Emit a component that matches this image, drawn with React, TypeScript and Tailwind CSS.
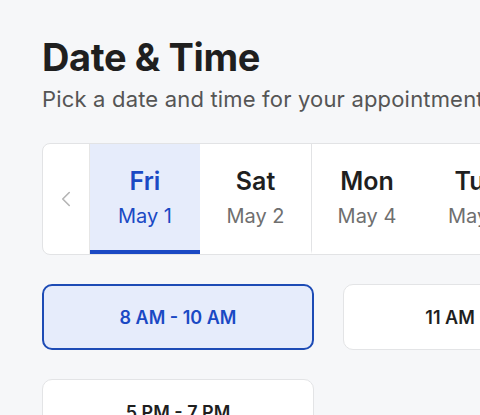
import React, { useState } from "react";
import { ChevronLeft } from "lucide-react";

const days = [
  { day: "Fri", date: "May 1" },
  { day: "Sat", date: "May 2", weekEnd: true },
  { day: "Mon", date: "May 4" },
  { day: "Tue", date: "May 5" },
  { day: "Wed", date: "May 6" },
];

const slots = ["8 AM - 10 AM", "11 AM - 1 PM", "5 PM - 7 PM"];

export default function App() {
  const [selectedDay, setSelectedDay] = useState(0);
  const [selectedSlot, setSelectedSlot] = useState(0);

  return (
    <div
      className="w-[480px] h-[415px] overflow-hidden bg-[#f6f7f9] text-[#1f1f1f]"
      style={{ fontFamily: "Inter, 'Noto Sans', sans-serif" }}
    >
      <div className="w-[615px] pl-[42px] pt-[38px]">
        <h1 className="text-[38px] leading-none font-bold tracking-[-0.01em] text-[#1f1f1f]">
          Date &amp; Time
        </h1>
        <p className="mt-[12px] text-[22px] leading-none tracking-[0.008em] text-[#555] whitespace-nowrap">
          Pick a date and time for your appointment
        </p>

        <div className="mt-[33px] flex h-[112px] w-[573px] overflow-hidden rounded-[8px] border border-[#e2e3e5] bg-white">
          <button className="flex w-[47px] shrink-0 items-center justify-center border-r border-[#e6e6e6] text-[#b5b5b5]">
            <ChevronLeft size={26} strokeWidth={1.5} />
          </button>
          {days.map((d, i) => {
            const active = i === selectedDay;
            return (
              <button
                key={d.day}
                onClick={() => setSelectedDay(i)}
                className={`flex shrink-0 flex-col items-center justify-center border-b-[4px] ${
                  d.weekEnd ? "w-[112px] border-r border-r-[#e2e3e5]" : "w-[110px]"
                } ${active ? "bg-[#e6ecfb] border-b-[#1a49c4]" : "bg-white border-b-transparent"}`}
              >
                <span
                  className={`text-[25px] leading-none font-semibold ${
                    active ? "text-[#1a49c4]" : "text-[#1f1f1f]"
                  }`}
                >
                  {d.day}
                </span>
                <span
                  className={`mt-[12px] text-[20px] leading-none ${
                    active ? "text-[#1a49c4]" : "text-[#6f6f6f]"
                  }`}
                >
                  {d.date}
                </span>
              </button>
            );
          })}
        </div>

        <div className="mt-[29px] grid w-[573px] grid-cols-2 gap-x-[29px] gap-y-[29px]">
          {slots.map((s, i) => {
            const active = i === selectedSlot;
            return (
              <button
                key={s}
                onClick={() => setSelectedSlot(i)}
                className={`h-[66px] rounded-[10px] text-[18px] font-semibold ${
                  active
                    ? "border-2 border-[#1d4bb5] bg-[#e6ecfb] text-[#1a49c4]"
                    : "border border-[#e3e4e6] bg-white text-[#1f1f1f]"
                }`}
              >
                {s}
              </button>
            );
          })}
        </div>
      </div>
    </div>
  );
}
